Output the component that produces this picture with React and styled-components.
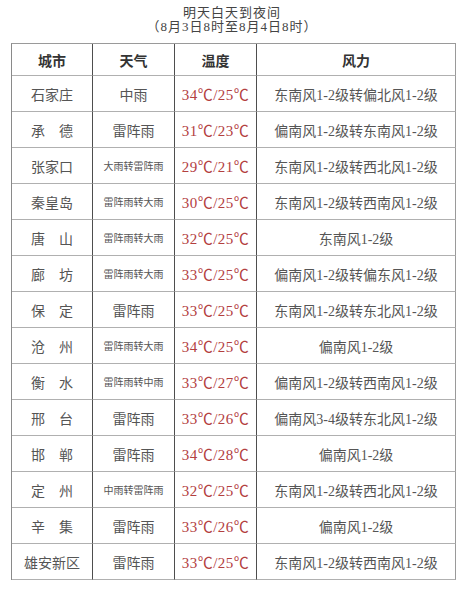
import React from "react";
import styled, { createGlobalStyle } from "styled-components";

const GlobalStyle = createGlobalStyle`
  body {
    margin: 0;
    background: #fff;
    font-family: "Liberation Serif", "Noto Sans CJK SC", serif;
    color: #4a4a4a;
  }
`;

const Page = styled.div`
  width: 464px;
  height: 600px;
  display: flex;
  flex-direction: column;
  align-items: center;
  padding-top: 6px;
  box-sizing: border-box;
`;

const Title = styled.div`
  font-size: 13px;
  line-height: 14px;
  letter-spacing: 1px;
  text-align: center;
  color: #444;
`;

const Table = styled.div`
  margin-top: 9px;
  margin-left: 3px;
  display: grid;
  grid-template-columns: 81px 82px 82px 199px;
  grid-template-rows: 32px;
  grid-auto-rows: 36px;
  border-top: 1px solid #9a9a9a;
  border-left: 1px solid #8a8a8a;
`;

const Cell = styled.div`
  display: flex;
  align-items: center;
  justify-content: center;
  border-bottom: 1px solid #b0b0b0;
  border-right: 1px solid ${(p) => (p.$last ? "#9a9a9a" : "#4e4e4e")};
  font-size: ${(p) => (p.$small ? "10px" : p.$hot ? "15px" : "14px")};
  font-weight: ${(p) => (p.$head ? 700 : 400)};
  color: ${(p) => (p.$hot ? "#b3403f" : p.$head ? "#333" : "#555")};
  letter-spacing: ${(p) => (p.$hot ? "0.5px" : "0")};
  white-space: nowrap;
`;

const rows = [
  ["石家庄", "中雨", "34℃/25℃", "东南风1-2级转偏北风1-2级"],
  ["承　德", "雷阵雨", "31℃/23℃", "偏南风1-2级转东南风1-2级"],
  ["张家口", "大雨转雷阵雨", "29℃/21℃", "东南风1-2级转西北风1-2级"],
  ["秦皇岛", "雷阵雨转大雨", "30℃/25℃", "东南风1-2级转西南风1-2级"],
  ["唐　山", "雷阵雨转大雨", "32℃/25℃", "东南风1-2级"],
  ["廊　坊", "雷阵雨转大雨", "33℃/25℃", "偏南风1-2级转偏东风1-2级"],
  ["保　定", "雷阵雨", "33℃/25℃", "东南风1-2级转东北风1-2级"],
  ["沧　州", "雷阵雨转大雨", "34℃/25℃", "偏南风1-2级"],
  ["衡　水", "雷阵雨转中雨", "33℃/27℃", "偏南风1-2级转西南风1-2级"],
  ["邢　台", "雷阵雨", "33℃/26℃", "偏南风3-4级转东北风1-2级"],
  ["邯　郸", "雷阵雨", "34℃/28℃", "偏南风1-2级"],
  ["定　州", "中雨转雷阵雨", "32℃/25℃", "东南风1-2级转西北风1-2级"],
  ["辛　集", "雷阵雨", "33℃/26℃", "偏南风1-2级"],
  ["雄安新区", "雷阵雨", "33℃/25℃", "东南风1-2级转西南风1-2级"],
];

const App = () => {
  return (
    <>
      <GlobalStyle />
      <Page>
        <Title>明天白天到夜间</Title>
        <Title>（8月3日8时至8月4日8时）</Title>
        <Table>
          <Cell $head>城市</Cell>
          <Cell $head>天气</Cell>
          <Cell $head>温度</Cell>
          <Cell $head $last>风力</Cell>
          {rows.map((row) => (
            <React.Fragment key={row[0]}>
              <Cell>{row[0]}</Cell>
              <Cell $small={row[1].length > 3}>{row[1]}</Cell>
              <Cell $hot>{row[2]}</Cell>
              <Cell $last>{row[3]}</Cell>
            </React.Fragment>
          ))}
        </Table>
      </Page>
    </>
  );
};

export default App;
